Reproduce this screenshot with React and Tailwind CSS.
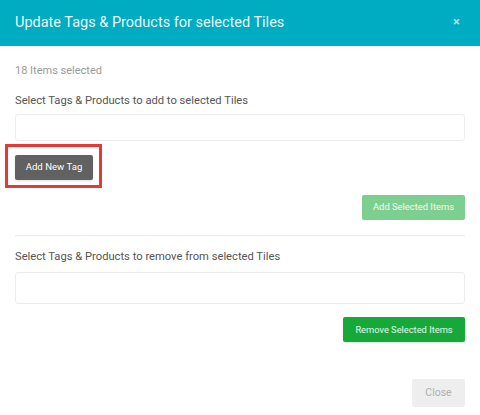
import React from 'react';

const font = { fontFamily: 'Roboto, "Liberation Sans", sans-serif' };

const App = () => {
    return (
        <div className="w-[480px] h-[415px] bg-white overflow-hidden" style={font}>
            {/* modal header */}
            <div className="h-[46px] bg-[#00acc2] flex items-center justify-between pl-[15px] pr-[20px]">
                <h2 className="text-[14.5px] text-white/95 leading-none">Update Tags &amp; Products for selected Tiles</h2>
                <button className="text-[#a6e3ec] text-[13px] font-bold leading-none -mt-[3px]">×</button>
            </div>

            <div className="px-[15px]">
                <p className="mt-[18px] text-[11px] text-[#9a9a9a] leading-[14px]">18 Items selected</p>

                <p className="mt-[16px] text-[11.2px] text-[#555] leading-[14px]">Select Tags &amp; Products to add to selected Tiles</p>
                <input className="mt-[6px] block w-full h-[27px] border border-[#ececec] rounded-[3px] outline-none" />

                <div className="mt-[3px] -ml-[10px] w-[97px] h-[44px] border-[3px] border-[#e53935] pl-[7px] pt-[6px]">
                    <button className="w-[78px] h-[25px] bg-[#616161] rounded-[2px] text-white text-[9.6px] shadow-sm">Add New Tag</button>
                </div>

                <div className="flex justify-end mt-[7px]">
                    <button className="w-[103px] h-[25px] bg-[#7dcf8f] rounded-[2px] text-white/90 text-[9.4px]">Add Selected Items</button>
                </div>

                <div className="mt-[15px] h-px bg-[#eaeaea]" />

                <p className="mt-[14px] text-[11.2px] text-[#555] leading-[14px]">Select Tags &amp; Products to remove from selected Tiles</p>
                <input className="mt-[8px] block w-full h-[32px] border border-[#ececec] rounded-[3px] outline-none" />

                <div className="flex justify-end mt-[13px]">
                    <button className="w-[122px] h-[25px] bg-[#17a83a] rounded-[2px] text-white/90 text-[9.3px] shadow-sm">Remove Selected Items</button>
                </div>

                <div className="flex justify-end mt-[37px]">
                    <button className="w-[53px] h-[28px] bg-[#eeeeee] rounded-[2px] text-[#b0b0b0] text-[10.5px]">Close</button>
                </div>
            </div>
        </div>
    );
};

export default App;
